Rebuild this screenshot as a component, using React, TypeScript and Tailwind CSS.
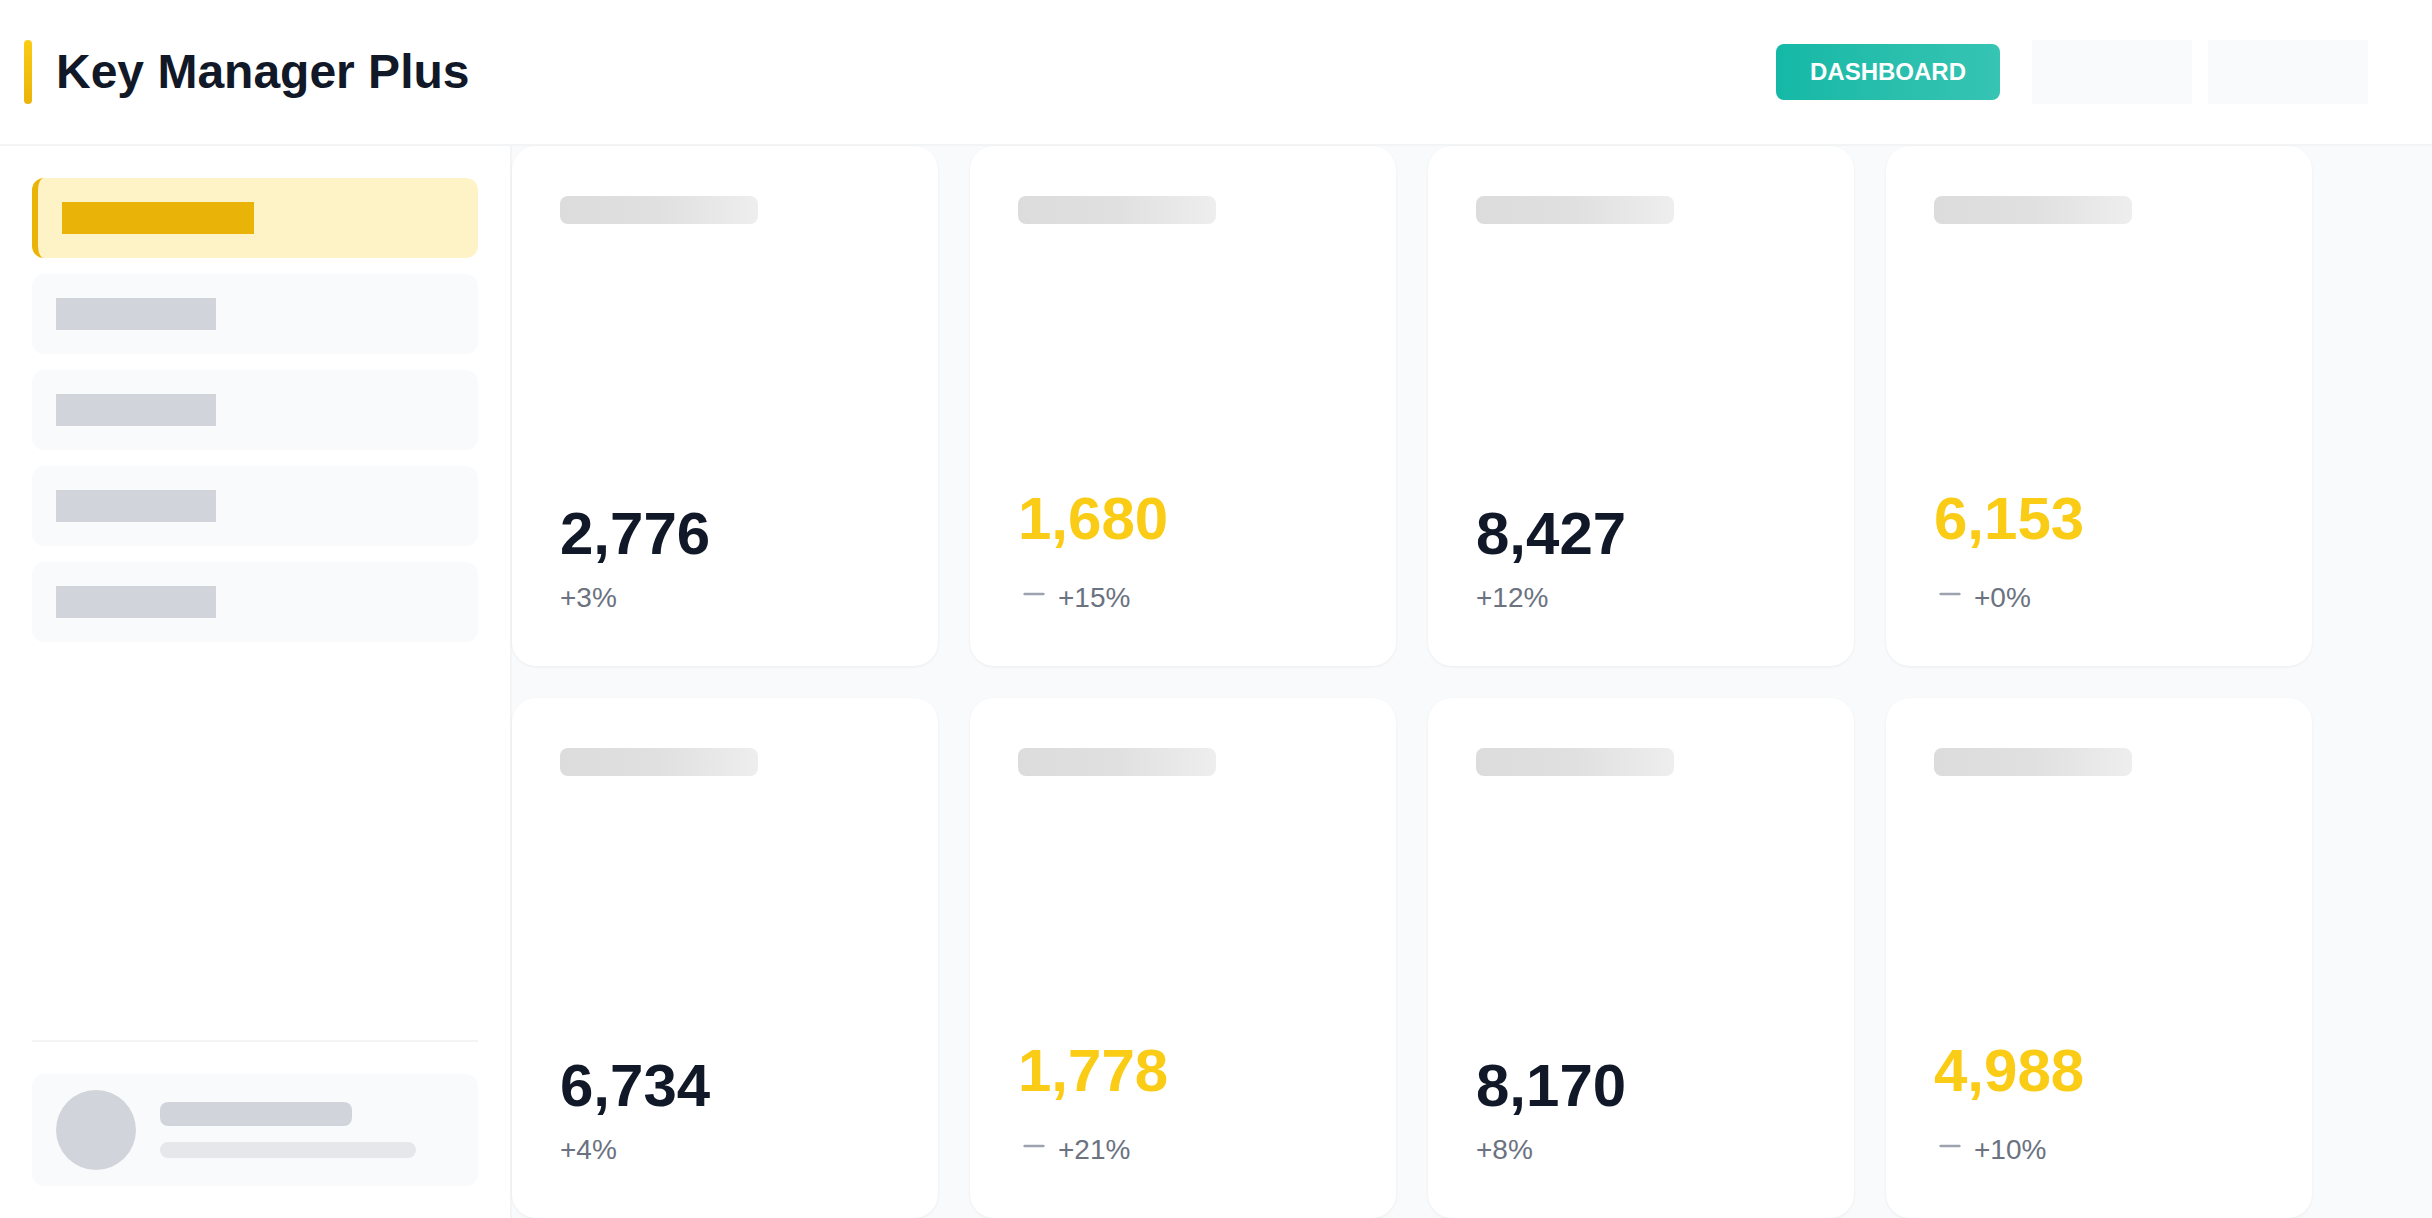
import React from "react";

type Stat = { value: string; change: string; accent: boolean };

const stats: Stat[] = [
  { value: "2,776", change: "+3%", accent: false },
  { value: "1,680", change: "+15%", accent: true },
  { value: "8,427", change: "+12%", accent: false },
  { value: "6,153", change: "+0%", accent: true },
  { value: "6,734", change: "+4%", accent: false },
  { value: "1,778", change: "+21%", accent: true },
  { value: "8,170", change: "+8%", accent: false },
  { value: "4,988", change: "+10%", accent: true },
];

function MinusIcon() {
  return (
    <svg
      viewBox="0 0 24 24"
      className="h-8 w-8 shrink-0 text-[#9ca3af]"
      fill="none"
      stroke="currentColor"
      strokeWidth={2}
      strokeLinecap="round"
    >
      <path d="M5 12h14" />
    </svg>
  );
}

function StatCard({ stat }: { stat: Stat }) {
  return (
    <div className="h-[520px] rounded-3xl bg-white px-12 pt-[50px] pb-12 flex flex-col justify-between shadow-[0_1px_3px_rgba(0,0,0,0.06)]">
      <div className="h-7 w-[198px] rounded-lg bg-gradient-to-r from-[#dcdcdc] via-[#e0e0e0] to-[#eeeeee]" />
      <div className="flex flex-col">
        <div
          className={`text-6xl leading-none font-bold ${
            stat.accent ? "text-[#facc15]" : "text-[#111827]"
          }`}
        >
          {stat.value}
        </div>
        <div
          className={`mt-3.5 flex items-start gap-2 text-[28px] leading-[40px] text-[#6b7280] ${
            stat.accent ? "pt-[15px]" : ""
          }`}
        >
          {stat.accent && <MinusIcon />}
          <span>{stat.change}</span>
        </div>
      </div>
    </div>
  );
}

export default function App() {
  return (
    <div
      className="h-screen w-full overflow-hidden bg-white flex flex-col"
      style={{ fontFamily: '"Liberation Sans", Arial, sans-serif' }}
    >
      {/* HEADER */}
      <header className="h-[146px] shrink-0 border-b-2 border-[#f3f4f6] flex items-center justify-between pl-6 pr-16">
        <div className="flex items-center gap-6">
          <div className="h-16 w-2 rounded-full bg-gradient-to-b from-[#facc15] to-[#eab308]" />
          <h1 className="text-5xl font-bold text-[#111827]">Key Manager Plus</h1>
        </div>
        <div className="flex items-center">
          <button className="h-14 px-[34px] rounded-lg bg-gradient-to-r from-[#14b8a6] to-[#36c4b3] text-2xl font-bold text-white">
            DASHBOARD
          </button>
          <div className="ml-8 flex gap-4">
            <div className="h-16 w-40 bg-[#f9fafb]" />
            <div className="h-16 w-40 bg-[#f9fafb]" />
          </div>
        </div>
      </header>

      <div className="flex flex-1 min-h-0">
        {/* SIDEBAR */}
        <aside className="w-[512px] shrink-0 border-r-2 border-[#f3f4f6] bg-white p-8 flex flex-col">
          <nav className="flex flex-col gap-4">
            <div className="h-20 rounded-xl border-l-[6px] border-[#eab308] bg-[#fef3c7] px-6 flex items-center">
              <div className="h-8 w-48 bg-[#eab308]" />
            </div>
            {[0, 1, 2, 3].map((i) => (
              <div key={i} className="h-20 rounded-xl bg-[#f9fafb] px-6 flex items-center">
                <div className="h-8 w-40 bg-[#d1d5db]" />
              </div>
            ))}
          </nav>
          <div className="flex-1" />
          <div className="border-t-2 border-[#f3f4f6] pt-8">
            <div className="rounded-xl bg-[#f9fafb] px-6 py-4 flex items-center gap-6">
              <div className="h-20 w-20 rounded-full bg-[#d1d5db]" />
              <div className="flex flex-col gap-4">
                <div className="h-6 w-48 rounded-lg bg-[#d1d5db]" />
                <div className="h-4 w-64 rounded-full bg-[#e5e7eb]" />
              </div>
            </div>
          </div>
        </aside>

        {/* MAIN */}
        <main className="flex-1 bg-[#f9fafb]">
          <div className="grid grid-cols-[repeat(4,426px)] gap-8">
            {stats.map((s, i) => (
              <StatCard key={i} stat={s} />
            ))}
          </div>
        </main>
      </div>
    </div>
  );
}
